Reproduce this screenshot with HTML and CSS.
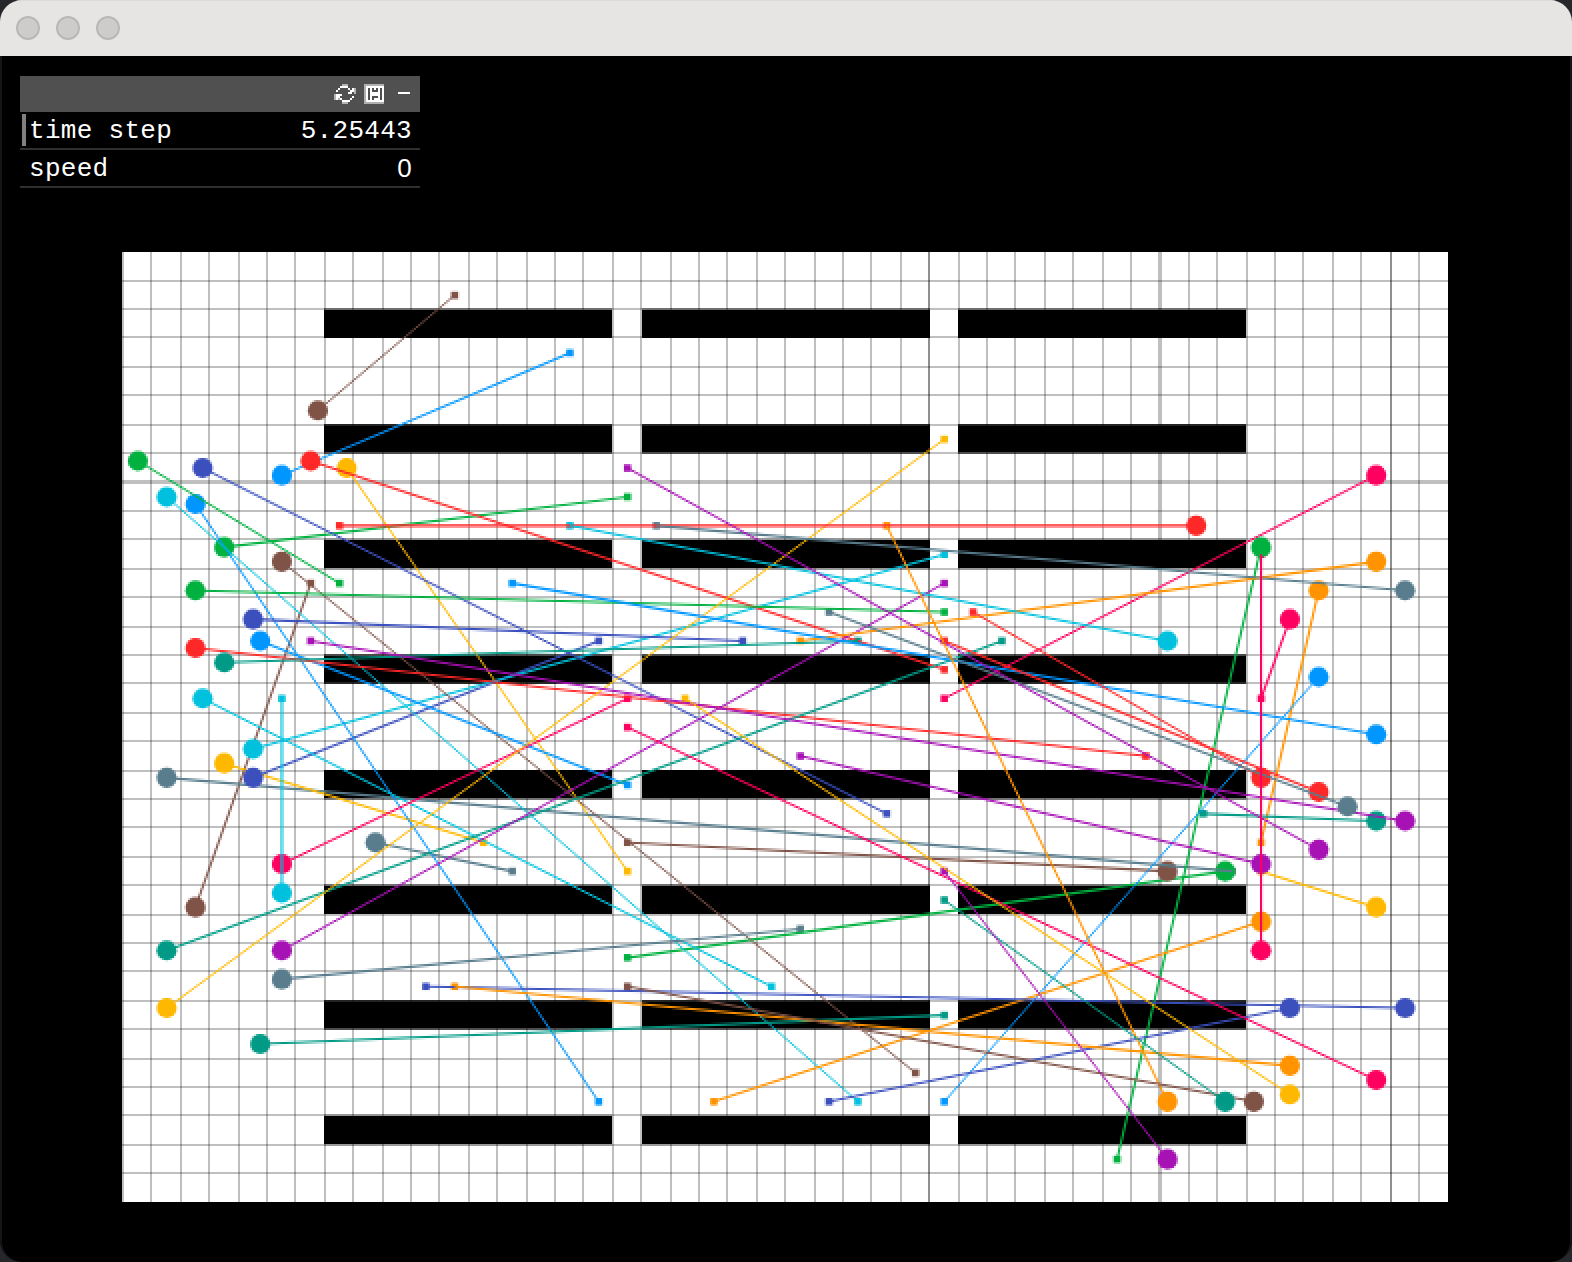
FILE: index.html
```html
<!DOCTYPE html>
<html lang="en">
<head>
<meta charset="utf-8">
<title>Simulation</title>
<link rel="stylesheet" href="styles.css">
</head>
<body>
<div class="window">
  <header class="titlebar">
    <span class="light"></span>
    <span class="light"></span>
    <span class="light"></span>
  </header>
  <main class="viewport">
    <canvas class="scene" id="scene" width="786" height="603"></canvas>
    <section class="panel">
      <div class="panel-head">
        <svg class="icon" width="22" height="20" viewBox="0 0 11 10" shape-rendering="crispEdges">
          <path fill="#b4b4b4" d="M4 0h3v1H4zM10 2h1v3h-1zM0 5h1v3H0zM4 9h3v1H4zM8 3h1v1H8zM2 7h1v1H2z"/>
          <path fill="#fff" d="M4 1h3v1H4zM3 1h1v1H3zM7 2h1v1H7zM2 2h1v1H2zM1 3h1v1H1zM9 2h1v2H9zM8 3h1v2H8zM7 4h1v1H7zM1 5h2v2H1zM3 5h1v1H3zM1 7h1v1H1zM9 6h1v1H9zM8 7h1v1H8zM3 7h1v1H3zM4 8h4v1H4z"/>
        </svg>
        <svg class="icon" width="20" height="20" viewBox="0 0 10 10" shape-rendering="crispEdges">
          <path fill="#b0b0b0" d="M0 0h10v10H0z"/>
          <path fill="#fff" d="M1 1h9v8H1z"/>
          <path fill="#505050" d="M2 2h1v6H2zM8 2h1v6H8zM4 2h1v2H4zM6 2h1v2H6zM5 3h1v1H5zM4 6h3v1H4zM4 7h1v1H4z"/>
        </svg>
        <span class="minimize"></span>
      </div>
      <div class="row active"><span>time step</span><span>5.25443</span></div>
      <div class="row"><span>speed</span><span class="zero">0</span></div>
    </section>
  </main>
</div>
<script src="scene.js"></script>
</body>
</html>
```
FILE: styles.css
```css
* {
  box-sizing: border-box;
}

body {
  margin: 0;
  background: #25272b;
}

.window {
  display: flex;
  flex-direction: column;
  width: 1572px;
  height: 1262px;
  border-radius: 22px;
  overflow: hidden;
  background: #000;
}

.titlebar {
  display: flex;
  align-items: center;
  gap: 16px;
  height: 56px;
  padding: 0 16px;
  background: #e6e5e3;
  box-shadow: inset 0 1px #dcdbd9;
  flex: none;
}

.light {
  width: 24px;
  height: 24px;
  border-radius: 50%;
  background: #cdccca;
  border: 2px solid #b9b8b6;
}

.viewport {
  position: relative;
  flex: 1;
  border: solid #151515;
  border-width: 0 2px 1px;
  border-radius: 0 0 22px 22px;
}

.scene {
  display: block;
  width: 1572px;
  height: 1206px;
  margin-left: -2px;
  image-rendering: pixelated;
  clip-path: inset(0 2px 1px round 0 0 20px 20px);
}

.panel {
  position: absolute;
  top: 20px;
  left: 18px;
  width: 400px;
  font: 26px/38px "Liberation Mono", monospace;
  letter-spacing: 0.3px;
  color: #fff;
}

.panel-head {
  display: flex;
  align-items: center;
  justify-content: flex-end;
  height: 36px;
  padding-right: 10px;
  background: #505050;
}

.icon {
  display: block;
  margin-right: 8px;
}

.minimize {
  width: 12px;
  height: 2px;
  margin: 0 0 2px 6px;
  background: #fff;
}

.row {
  display: flex;
  justify-content: space-between;
  height: 38px;
  padding: 0 8px 0 9px;
  border-bottom: 2px solid #2f2f2f;
  background: #000;
}

.row.active {
  background: linear-gradient(#808080, #808080) 2px 2px / 4px 32px no-repeat #000;
}

.zero {
  font-family: "Liberation Sans", sans-serif;
  line-height: 36px;
}
```
FILE: scene.js
```js
// Warehouse grid: 46 x 33 cells, drawn in points (one point is two pixels).
const CELL = 14.4, OX = 61.4, OY = 97.79, COLS = 46, ROWS = 33;
const ctx = document.getElementById('scene').getContext('2d');
const px = c => OX + c * CELL;
const py = r => OY + r * CELL;

const C = {
  red: '#ff2828', green: '#00b140', orange: '#ff9300', amber: '#ffb800',
  cyan: '#00c1dd', blue: '#0096ff', indigo: '#3b50bd', purple: '#a712b5',
  teal: '#009a86', slate: '#597d8d', pink: '#ff0060', brown: '#805347'
};

// colour, agent column, agent row, goal column, goal row
const agents = [
  ['green', 38.25, 21.5, 17.5, 24.5],
  ['brown', 36.25, 21.5, 17.5, 20.5],
  ['green', 3.5, 10.25, 17.5, 8.5],
  ['amber', 7.75, 7.5, 17.5, 21.5],
  ['blue', 5.5, 7.75, 15.5, 3.5],
  ['slate', 8.75, 20.5, 13.5, 21.5],
  ['brown', 2.5, 22.75, 6.5, 11.5],
  ['slate', 1.5, 18.25, 38.5, 21.5],
  ['amber', 3.5, 17.75, 12.5, 20.5],
  ['indigo', 4.5, 18.25, 16.5, 13.5],
  ['cyan', 4.5, 17.25, 28.5, 10.5],
  ['blue', 2.5, 8.75, 16.5, 29.5],
  ['green', 0.5, 7.25, 7.5, 11.5],
  ['cyan', 1.5, 8.5, 25.5, 29.5],
  ['red', 6.5, 7.25, 28.5, 14.5],
  ['brown', 6.75, 5.5, 11.5, 1.5],
  ['indigo', 2.75, 7.5, 26.5, 19.5],
  ['brown', 5.5, 10.75, 27.5, 28.5],
  ['green', 2.5, 11.75, 28.5, 12.5],
  ['indigo', 4.5, 12.75, 21.5, 13.5],
  ['blue', 4.75, 13.5, 17.5, 18.5],
  ['red', 2.5, 13.75, 35.5, 17.5],
  ['teal', 3.5, 14.25, 25.5, 13.5],
  ['cyan', 2.75, 15.5, 22.5, 25.5],
  ['pink', 5.5, 21.25, 17.5, 15.5],
  ['cyan', 5.5, 22.25, 5.5, 15.5],
  ['teal', 1.5, 24.25, 30.5, 13.5],
  ['purple', 5.5, 24.25, 28.5, 11.5],
  ['slate', 5.5, 25.25, 23.5, 23.5],
  ['amber', 1.5, 26.25, 28.5, 6.5],
  ['teal', 4.75, 27.5, 28.5, 26.5],
  ['pink', 43.5, 7.75, 28.5, 15.5],
  ['red', 37.25, 9.5, 7.5, 9.5],
  ['green', 39.5, 10.25, 34.5, 31.5],
  ['orange', 43.5, 10.75, 23.5, 13.5],
  ['orange', 41.5, 11.75, 39.5, 20.5],
  ['slate', 44.5, 11.75, 18.5, 9.5],
  ['pink', 40.5, 12.75, 39.5, 15.5],
  ['cyan', 36.25, 13.5, 15.5, 9.5],
  ['blue', 41.5, 14.75, 28.5, 29.5],
  ['blue', 43.5, 16.75, 13.5, 11.5],
  ['red', 39.5, 18.25, 29.5, 12.5],
  ['red', 41.5, 18.75, 28.5, 13.5],
  ['teal', 43.5, 19.75, 37.5, 19.5],
  ['purple', 44.5, 19.75, 6.5, 13.5],
  ['slate', 42.5, 19.25, 24.5, 12.5],
  ['purple', 41.5, 20.75, 17.5, 7.5],
  ['amber', 43.5, 22.75, 39.5, 21.5],
  ['purple', 39.5, 21.25, 23.5, 17.5],
  ['orange', 39.5, 23.25, 20.5, 29.5],
  ['indigo', 44.5, 26.25, 10.5, 25.5],
  ['indigo', 40.5, 26.25, 24.5, 29.5],
  ['orange', 40.5, 28.25, 11.5, 25.5],
  ['pink', 43.5, 28.75, 17.5, 16.5],
  ['amber', 40.5, 29.25, 19.5, 15.5],
  ['orange', 36.25, 29.5, 26.5, 9.5],
  ['brown', 39.25, 29.5, 17.5, 25.5],
  ['teal', 38.25, 29.5, 28.5, 22.5],
  ['purple', 36.25, 31.5, 28.5, 21.5],
  ['pink', 39.5, 24.25, 39.5, 10.5]
];

// Floor
ctx.fillStyle = '#000';
ctx.fillRect(0, 0, 786, 603);
ctx.fillStyle = '#fff';
ctx.fillRect(61, 98, 663, 475);

// Shelves: three columns of eight
ctx.fillStyle = '#000';
for (const [a, b] of [[7, 17], [18, 28], [29, 39]]) {
  const left = Math.round(px(a)), right = Math.round(px(b));
  for (let r = 2; r <= 30; r += 4) {
    ctx.fillRect(left, py(r), right - left, CELL);
  }
}

// Grid lines
ctx.fillStyle = 'rgba(0,0,0,0.25)';
for (let c = 0; c < COLS; c++) {
  const wide = c === 36;
  const x = Math.floor(px(c) + 1e-6);
  ctx.fillRect(x, 98, wide ? 2 : 1, 475);
  if (c === 28 || c === 44) ctx.fillRect(x, 98, 1, 475);
}
for (let r = 1; r < ROWS; r++) {
  const y = r === 8 ? 212 : Math.floor(py(r) + (r === 3 ? 0 : 0.02));
  ctx.fillRect(61, y, 663, r === 8 ? 2 : 1);
}

// Goals, then each agent with its path
ctx.translate(0.35, 0.25);
for (const [color, , , gc, gr] of agents) {
  ctx.fillStyle = C[color];
  ctx.fillRect(px(gc) - 1.8, py(gr) - 1.8, 3.6, 3.6);
}
for (const [color, ac, ar, gc, gr] of agents) {
  const dx = Math.abs(gc - ac), dy = Math.abs(gr - ar);
  ctx.fillStyle = ctx.strokeStyle = C[color];
  ctx.beginPath();
  ctx.arc(px(ac), py(ar), 5.04, 0, Math.PI * 2);
  ctx.fill();
  // One point wide along the minor axis, so diagonals stay thin
  ctx.lineWidth = 1.1 * Math.max(dx, dy) / Math.hypot(dx, dy);
  ctx.beginPath();
  ctx.moveTo(px(ac), py(ar));
  ctx.lineTo(px(gc), py(gr));
  ctx.stroke();
}
```
